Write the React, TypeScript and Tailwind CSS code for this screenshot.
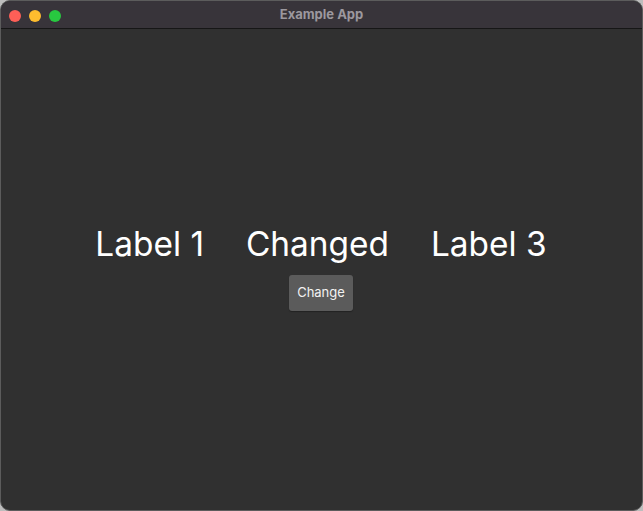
import React, { useState } from 'react';

const TrafficLights: React.FC = () => (
  <div className="absolute left-[8px] top-[9px] flex gap-[8px]">
    <span className="h-[12px] w-[12px] rounded-full bg-[#fe5f57]" />
    <span className="h-[12px] w-[12px] rounded-full bg-[#febc2e]" />
    <span className="h-[12px] w-[12px] rounded-full bg-[#28c840]" />
  </div>
);

export default function App() {
  const [middle, setMiddle] = useState('Changed');

  return (
    <div className="h-[511px] w-[643px] bg-[#bdbdbd]">
      <div className="flex h-full w-full flex-col overflow-hidden rounded-[10px] border border-[#5c5c5c] bg-[#303030] font-['Inter',sans-serif]">
        {/* title bar */}
        <div className="relative flex h-[28px] shrink-0 items-center justify-center border-b border-[#161616] bg-[#38343a]">
          <TrafficLights />
          <span className="text-[13px] font-bold text-[#9c989e]">Example App</span>
        </div>

        {/* content */}
        <div className="flex flex-1 flex-col items-center justify-center pb-[6px] pr-[1px]">
          <div className="flex items-center gap-[42px] text-[33.4px] leading-[42px] text-white">
            <span>Label 1</span>
            <span>{middle}</span>
            <span>Label 3</span>
          </div>
          <button
            onClick={() => setMiddle('Changed')}
            className="mt-[10px] h-[36px] w-[64px] rounded-[3px] bg-[#5b5b5b] text-[13px] text-[#f2f2f2] shadow-[0_1px_1px_rgba(0,0,0,0.3)]"
          >
            Change
          </button>
        </div>
      </div>
    </div>
  );
}
